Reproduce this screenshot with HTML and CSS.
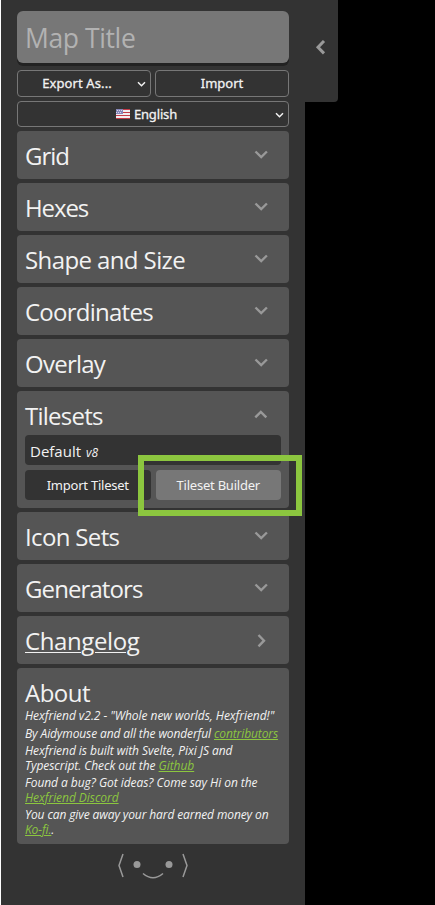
FILE: index.html
```html
<!DOCTYPE html>
<html lang="en">
<head>
<meta charset="utf-8">
<title>Hexfriend</title>
<link rel="stylesheet" href="styles.css">
</head>
<body>
<svg width="0" height="0" class="defs">
  <symbol id="down" viewBox="0 0 14 9"><path d="M1.5 1.5 7.200 7 12.900 1.5"/></symbol>
  <symbol id="up" viewBox="0 0 14 9"><path d="M1.300 7.300 6.800 1.900 12.300 7.300"/></symbol>
  <symbol id="right" viewBox="0 0 9 14"><path d="M1.5 1 7 6.700 1.5 12.400"/></symbol>
  <symbol id="left" viewBox="0 0 11 15"><path d="M9 1 3 7.200 9 13.400"/></symbol>
</svg>
<main class="app">
  <aside class="sidebar">
    <div class="title-input"><span>Map Title</span></div>
    <div class="actions">
      <div class="button select"><span class="export">Export As...</span><svg class="caret"><path d="M1 1.2 4.5 4.7 8 1.2"/></svg></div>
      <div class="button"><span class="import">Import</span></div>
    </div>
    <div class="button select language">
      <svg class="flag" viewBox="0 0 14 10"><path fill="#f2eef0" d="M0 0h14v10H0z"/><path fill="#c43b48" d="M7 0h7v1H7zM7 3h7v1H7zM0 6h14v1H0zM0 9h14v1H0z"/><path fill="#8586b8" d="M0 0h7v5H0z"/><path stroke="#d5d5e8" stroke-dasharray="1 1" d="M1 1.5h6M0 3.5h6"/></svg>
      <span class="english">English</span><svg class="caret"><path d="M1 1.2 4.5 4.7 8 1.2"/></svg>
    </div>
    <section class="card"><h2><span class="t-grid">Grid</span><svg class="chevron"><use href="#down"/></svg></h2></section>
    <section class="card"><h2><span class="t-hexes">Hexes</span><svg class="chevron"><use href="#down"/></svg></h2></section>
    <section class="card"><h2><span class="t-shape">Shape and Size</span><svg class="chevron"><use href="#down"/></svg></h2></section>
    <section class="card"><h2><span class="t-coord">Coordinates</span><svg class="chevron"><use href="#down"/></svg></h2></section>
    <section class="card"><h2><span class="t-over">Overlay</span><svg class="chevron"><use href="#down"/></svg></h2></section>
    <section class="card tilesets">
      <h2><span class="t-tile">Tilesets</span><svg class="chevron"><use href="#up"/></svg></h2>
      <div class="tileset"><span class="default">Default</span><em>v8</em></div>
      <div class="tile-actions">
        <div class="fill"><span>Import Tileset</span></div>
        <div class="fill active"><span>Tileset Builder</span><i class="highlight"></i></div>
      </div>
    </section>
    <section class="card"><h2><span class="t-icon">Icon Sets</span><svg class="chevron"><use href="#down"/></svg></h2></section>
    <section class="card"><h2><span class="t-gen">Generators</span><svg class="chevron"><use href="#down"/></svg></h2></section>
    <section class="card"><h2><a class="t-change">Changelog</a><svg class="chevron side"><use href="#right"/></svg></h2></section>
    <section class="card about">
      <h2><span class="t-about">About</span></h2>
      <p class="version">Hexfriend v2.2 - "Whole new worlds, Hexfriend!"</p>
      <p>By Aidymouse and all the wonderful <a>contributors</a></p>
      <p class="built">Hexfriend is built with Svelte, Pixi JS and<br>Typescript. Check out the <a>Github</a></p>
      <p class="built">Found a bug? Got ideas? Come say Hi on the<br><a>Hexfriend Discord</a></p>
      <p>You can give away your hard earned money on<br><a>Ko-fi.</a>.</p>
    </section>
    <svg class="face" viewBox="0 0 74 28"><path d="M6 1 2 12.500 6 24M66 1l4 11.500L66 24M26 20.500Q36 29 46 20.500"/><circle cx="20" cy="11.500" r="3.500"/><circle cx="52" cy="11.500" r="3.500"/></svg>
  </aside>
  <div class="tab"><svg><use href="#left"/></svg></div>
</main>
</body>
</html>
```
FILE: styles.css
```css
* { box-sizing: border-box; }
body { margin: 0; background: #000; color: #f2f2f2; font-family: "Open Sans", sans-serif; overflow: hidden; }
svg { fill: none; }
.defs { position: absolute; }
.app { display: flex; align-items: flex-start; height: 905px; border-left: 1px solid #fff; }
.sidebar { width: 304px; height: 905px; padding: 11px 16px 0; background: #333; display: flex; flex-direction: column; gap: 4px; }
.title-input { height: 52px; margin-bottom: 3px; padding-left: 8px; border-radius: 6px; background: #777; box-shadow: 0 3px 0 #222; color: #b2b2b2; font-size: 26.5px; line-height: 54px; }
.title-input span { letter-spacing: -.4px; }
.actions { display: flex; gap: 4px; height: 27px; }
.button { flex: 1; border: 1px solid #777; border-radius: 4px; font: 400 13px/25px "Noto Sans", sans-serif; letter-spacing: -.15px; -webkit-text-stroke: .3px #f2f2f2; text-align: center; }
.select { display: flex; align-items: center; justify-content: center; position: relative; }
.export { margin-right: 14px; letter-spacing: .1px; }
.import { letter-spacing: 0; }
.language { flex: none; height: 26px; gap: 4px; }
.english { margin-right: 13px; }
.caret { position: absolute; right: 4px; top: 10px; width: 9px; height: 6px; stroke: #f2f2f2; stroke-width: 1.5; }
.flag { width: 14px; height: 10px; }
.card { height: 48px; border-radius: 4px; background: #555; padding: 0 8px; flex: none; }
h2 { margin: 0; height: 48px; display: flex; justify-content: space-between; font-size: 24px; font-weight: 400; line-height: 50px; }
.t-grid { letter-spacing: -1px; }
.t-hexes { letter-spacing: -1.1px; }
.t-shape { letter-spacing: -.6px; }
.t-coord, .t-over, .t-tile { letter-spacing: -.75px; }
.t-icon { letter-spacing: -.65px; }
.t-gen { letter-spacing: -.9px; }
.t-change { letter-spacing: -.4px; text-decoration: underline; text-decoration-thickness: 1px; text-underline-offset: 2px; }
.t-about { letter-spacing: -.5px; }
.chevron { width: 14px; height: 9px; margin: 19px 13px 0 0; stroke: #999; stroke-width: 2.4; }
.side { width: 9px; height: 14px; margin: 18px 15px 0 0; }
.tilesets { height: 117px; }
.tilesets h2 { height: 44px; }
.tileset { height: 30px; padding: 1px 5px 0; border-radius: 4px; background: #333; font-size: 15px; line-height: 31px; }
.tileset em { margin-left: 5px; font-size: 12px; }
.tile-actions { display: flex; gap: 5px; margin-top: 5px; }
.fill { flex: 1; height: 30px; border-radius: 4px; background: #333; font: 13px/30px "Noto Sans", sans-serif; letter-spacing: -.23px; text-align: center; position: relative; }
.active { background: #777; }
.highlight { position: absolute; left: -18px; top: -15px; width: 164px; height: 61px; border: 6px solid #8cc63f; }
.about { height: 176px; }
.about h2 { height: 41px; }
p { margin: 0 0 3px; font-size: 12px; line-height: 14.5px; font-style: italic; white-space: nowrap; letter-spacing: -.11px; }
.version, .built { letter-spacing: -.05px; }
p a { color: #8cc63f; text-decoration: underline; }
.face { width: 74px; height: 28px; margin: 5px 0 0 100px; stroke: #999; stroke-width: 1.5; }
.face circle { fill: #999; stroke: none; }
.tab { width: 33px; height: 102px; background: #333; border-radius: 0 0 4px 0; padding: 40px 0 0 10px; }
.tab svg { width: 11px; height: 15px; stroke: #999; stroke-width: 3; display: block; }
```
